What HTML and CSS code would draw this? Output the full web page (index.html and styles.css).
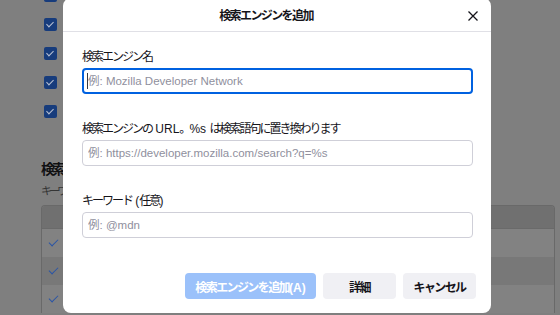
FILE: index.html
```html
<!DOCTYPE html>
<html lang="ja">
<head>
    <meta charset="UTF-8">
    <title>検索エンジンを追加</title>
    <link rel="stylesheet" href="styles.css">
</head>
<body>
    <div class="page">
        <div class="check-list">
            <div class="check-row"><span class="checkbox"></span></div>
            <div class="check-row"><span class="checkbox"></span></div>
            <div class="check-row"><span class="checkbox"></span></div>
            <div class="check-row"><span class="checkbox"></span></div>
            <div class="check-row"><span class="checkbox"></span></div>
        </div>

        <h2 class="section-title">検索</h2>
        <p class="section-desc">キーワ</p>

        <div class="engine-table">
            <div class="table-head"></div>
            <div class="table-row"><span class="tick"></span></div>
            <div class="table-row alt"><span class="tick"></span></div>
            <div class="table-row"><span class="tick"></span></div>
        </div>
    </div>

    <div class="dialog">
        <div class="dialog-header">
            <h1>検索エンジンを追加</h1>
            <button class="close-btn" aria-label="閉じる">
                <svg width="12" height="12" viewBox="0 0 12 12">
                    <path d="M1.5 1.5 L10.5 10.5 M10.5 1.5 L1.5 10.5" stroke="#15141a" stroke-width="1.3" fill="none"/>
                </svg>
            </button>
        </div>

        <div class="dialog-body">
            <div class="field">
                <label>検索エンジン名</label>
                <div class="input-wrap">
                    <input class="text-input focused" type="text" placeholder="例: Mozilla Developer Network">
                    <span class="caret"></span>
                </div>
            </div>
            <div class="field">
                <label>検索エンジンの<span class="latin"> URL</span>。<span class="latin">%s </span>は検索語句に置き換わります</label>
                <div class="input-wrap">
                    <input class="text-input" type="text" placeholder="例: https://developer.mozilla.com/search?q=%s">
                </div>
            </div>
            <div class="field">
                <label>キーワード<span class="latin"> (</span>任意<span class="latin">)</span></label>
                <div class="input-wrap">
                    <input class="text-input" type="text" placeholder="例: @mdn">
                </div>
            </div>
        </div>

        <div class="dialog-buttons">
            <button class="btn primary" disabled>検索エンジンを追加<span class="latin">(A)</span></button>
            <button class="btn">詳細</button>
            <button class="btn">キャンセル</button>
        </div>
    </div>
</body>
</html>
```

FILE: styles.css
```css
* {
    margin: 0;
    padding: 0;
    box-sizing: border-box;
}

body {
    width: 560px;
    height: 315px;
    overflow: hidden;
    position: relative;
    background: #7f7f7f;
    font-family: "Liberation Sans", "Noto Sans CJK JP", sans-serif;
    color: #15141a;
}

.latin {
    letter-spacing: 0;
}

/* 背景のページ (暗く表示) */
.page {
    padding-left: 41px;
    padding-right: 5px;
}

.check-list {
    margin-top: -19px;
}

.check-row {
    height: 29px;
    display: flex;
    align-items: center;
    padding-left: 3px;
}

.checkbox {
    width: 13px;
    height: 13px;
    border-radius: 2px;
    background: #173c7c;
    position: relative;
}

.checkbox::after {
    content: "";
    position: absolute;
    left: 4px;
    top: 2px;
    width: 3px;
    height: 6px;
    border: solid #b9c2d4;
    border-width: 0 1.5px 1.5px 0;
    transform: rotate(45deg);
}

.section-title {
    margin-top: 34px;
    font-size: 13.5px;
    line-height: 20px;
    font-weight: 700;
    letter-spacing: -2.5px;
    color: #101012;
    white-space: nowrap;
}

.section-desc {
    margin-top: 3px;
    font-size: 11px;
    line-height: 16px;
    letter-spacing: -3px;
    color: #353535;
    white-space: nowrap;
}

.engine-table {
    margin-top: 6px;
    border: 1px solid #696969;
    border-bottom: none;
    border-radius: 4px 4px 0 0;
    overflow: hidden;
}

.table-head {
    height: 23px;
    background: #707070;
    border-bottom: 1px solid #6a6a6a;
}

.table-row {
    height: 28px;
    background: #828282;
    display: flex;
    align-items: center;
    padding-left: 6px;
}

.table-row.alt {
    background: #787878;
}

.tick {
    width: 11px;
    height: 7px;
    position: relative;
}

.tick::after {
    content: "";
    position: absolute;
    left: 3px;
    top: -3px;
    width: 4px;
    height: 8px;
    border: solid #2a55a6;
    border-width: 0 1.5px 1.5px 0;
    transform: rotate(45deg);
}

/* ダイアログ */
.dialog {
    position: absolute;
    left: 63px;
    top: -2px;
    width: 428px;
    height: 315px;
    background: #ffffff;
    border-radius: 8px;
    display: flex;
    flex-direction: column;
}

.dialog-header {
    height: 34px;
    border-bottom: 1px solid #e0e0e6;
    display: flex;
    align-items: center;
    justify-content: center;
    position: relative;
}

.dialog-header h1 {
    font-size: 12px;
    font-weight: 700;
    letter-spacing: -1.6px;
    margin-left: -22px;
}

.close-btn {
    position: absolute;
    right: 10px;
    top: 10px;
    width: 16px;
    height: 16px;
    border: none;
    background: transparent;
    display: flex;
    align-items: center;
    justify-content: center;
}

.dialog-body {
    padding: 16px 18px 0 19px;
    display: flex;
    flex-direction: column;
    gap: 26px;
}

.field label {
    display: block;
    font-size: 12px;
    line-height: 18px;
    letter-spacing: -2px;
    margin-bottom: 2px;
    white-space: nowrap;
}

.input-wrap {
    position: relative;
}

.text-input {
    width: 100%;
    height: 26px;
    border: 1px solid #cfcfd8;
    border-radius: 4px;
    padding: 0 5px;
    font-family: inherit;
    font-size: 11.5px;
    color: #15141a;
    outline: none;
}

.text-input::placeholder {
    color: #8f8f9d;
}

.text-input.focused {
    border: 2px solid #0061e0;
    padding: 0 4px;
}

.caret {
    position: absolute;
    left: 5px;
    top: 5px;
    width: 1px;
    height: 16px;
    background: #3a3a40;
}

.dialog-buttons {
    margin-top: auto;
    padding: 0 15px 14px 0;
    display: flex;
    justify-content: flex-end;
    gap: 7px;
}

.btn {
    height: 26px;
    min-width: 73px;
    padding: 0 8px;
    border: none;
    border-radius: 4px;
    background: #f0f0f4;
    font-family: inherit;
    font-size: 12px;
    font-weight: 700;
    letter-spacing: -1.6px;
    color: #15141a;
    white-space: nowrap;
}

.btn.primary {
    width: 131px;
    background: #9bc1fa;
    color: #ffffff;
}
```
